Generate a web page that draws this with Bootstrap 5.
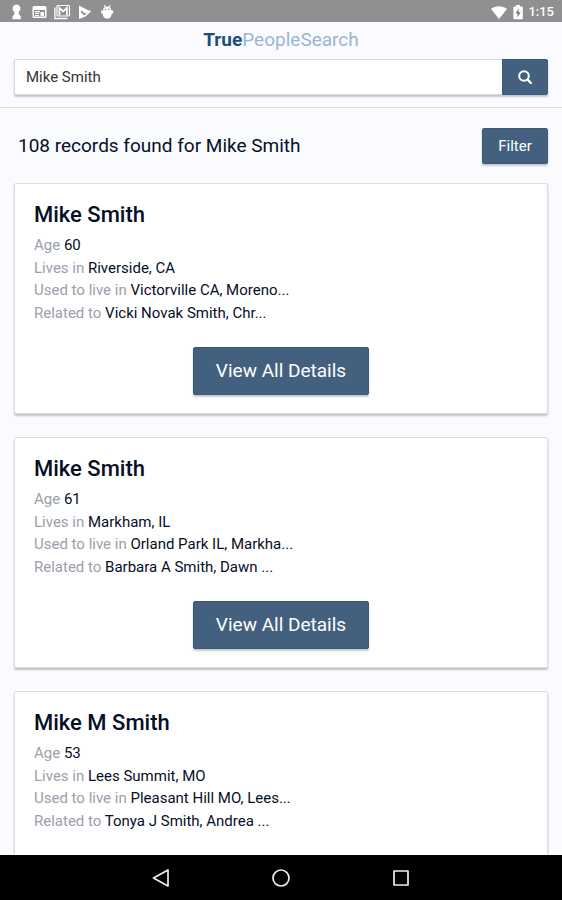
<!DOCTYPE html>
<html lang="en">
<head>
<meta charset="utf-8">
<meta name="viewport" content="width=device-width, initial-scale=1">
<title>TruePeopleSearch</title>
<link href="https://cdn.jsdelivr.net/npm/bootstrap@5.3.0/dist/css/bootstrap.min.css" rel="stylesheet">
<style>
body { font-family: Roboto, "Liberation Sans", sans-serif; background: #fafbff; color: #050f26; font-size: 15px; }
.status-bar { background: #909090; height: 22px; font-size: 13px; font-weight: 500; line-height: 22px; padding: 1px 8px 0; }
.status-icons { gap: 6px; }
.site-header { padding: 6px 14px 12px; border-bottom: 1px solid #dcdde0; }
.brand { font-size: 19px; line-height: 24px; color: #9ab5d1; margin-bottom: 7px; }
.brand:hover { color: #9ab5d1; }
.brand strong { color: #1d4f7b; font-weight: 700; }
.search-box { box-shadow: 0 2px 2px #c4c5c8; border-radius: 2px; }
.search-box .form-control { height: 36px; border: 1px solid #d6d7d9; border-radius: 2px; padding: 0 11px; font-size: 15px; color: #333; }
.btn-steel { --bs-btn-bg: #43617f; --bs-btn-color: #fff; --bs-btn-border-color: #3b5a79; --bs-btn-hover-bg: #385470; --bs-btn-hover-color: #fff; --bs-btn-border-radius: 2px; }
.search-btn { width: 46px; padding: 0 0 2px; }
.filter-btn { width: 66px; height: 36px; padding: 0; font-size: 15px; box-shadow: 0 2px 2px #c9cacd; }
.results { padding: 20px 14px 0; }
.results-head { margin-bottom: 19px; padding-left: 4px; }
.results-title { font-size: 19px; line-height: 24px; font-weight: 400; }
.result-card { border: 1px solid #dcdde0; border-radius: 2px; box-shadow: 0 2px 2px #c2c3c5; padding: 17px 19px 18px; margin-bottom: 23px; background: #fff; color: inherit; }
.person-name { font-size: 22px; line-height: 28px; font-weight: 500; margin-bottom: 5px; }
.fact-label { color: #9aa0ac; }
.details-btn { width: 176px; height: 48px; padding: 0; margin-top: 23px; font-size: 19px; line-height: 46px; box-shadow: 0 2px 2px #c9cacd; }
.system-nav { background: #000; height: 45px; gap: 96px; }
.system-nav button { width: 24px; height: 24px; }
</style>
<script src="https://cdn.jsdelivr.net/npm/bootstrap@5.3.0/dist/js/bootstrap.bundle.min.js"></script>
</head>
<body>
<div class="d-flex flex-column vh-100 overflow-hidden">
  <div class="status-bar d-flex justify-content-between align-items-center text-white flex-shrink-0">
    <div class="status-icons d-flex align-items-center">
      <svg width="17" height="16" viewBox="0 0 17 16" fill="#fff" aria-hidden="true"><path d="M8.500 .5a4 4 0 0 1 2.500 7.100L10.800 10l2 2.500v2.800H4.500v-2.800l2-2.500L6 7.600A4 4 0 0 1 8.500.5z"/></svg>
      <svg width="17" height="16" viewBox="0 0 17 16" aria-hidden="true"><path fill="#fff" fill-rule="evenodd" d="M3 2h11a1.500 1.500 0 0 1 1.500 1.500v9A1.500 1.500 0 0 1 14 14H3a1.500 1.500 0 0 1-1.500-1.500v-9A1.500 1.500 0 0 1 3 2zm0 4v6.500h11V6z"/><path fill="#fff" d="M4 7h5v1.200H4zm0 2h4v1.100H4zm0 2h4v1H4zM9.500 8H13v4H9.500z"/></svg>
      <svg width="17" height="16" viewBox="0 0 17 16" fill="none" stroke="#fff" aria-hidden="true"><path d="M.9 3.500v11h12.500" stroke-width="1.300"/><rect x="3" y="1.500" width="12.500" height="10.500" rx="1" stroke-width="1.200"/><path d="M5.500 11.500V4l3.700 3.300L12.900 4v7.500" stroke-width="1.700"/></svg>
      <svg width="17" height="16" viewBox="0 0 17 16" aria-hidden="true"><path fill="#fff" d="M2 1.500 14 7.800 7.500 9.200 4.500 6.500 3.500 8l3.700 3.500L12.700 6l1.300 1.800-6 5L2 15z"/></svg>
      <svg width="17" height="16" viewBox="0 0 17 16" aria-hidden="true"><path d="m4 1 1.600 2.500m4.800-2.500-1.600 2.500" stroke="#fff" stroke-width="1.100"/><path fill="#fff" d="M3 6.500C3.200 4 4.800 2.600 7.200 2.600S11.200 4 11.400 6.500h1.800v3h-1.500c0 3.200-1.700 5.200-4.500 5.200s-4.500-2-4.500-5.200H1.200v-3z"/><circle cx="5.400" cy="5.500" r=".8" fill="#909090"/><circle cx="9" cy="5.500" r=".8" fill="#909090"/></svg>
    </div>
    <div class="d-flex align-items-center">
      <svg class="me-1" width="18" height="16" viewBox="0 0 18 16" fill="#fff" aria-hidden="true"><path d="M1 5C5.500 1.200 12.500 1.200 17 5L9 15z"/></svg>
      <svg class="me-1" width="12" height="16" viewBox="0 0 12 16" aria-hidden="true"><path fill="#fff" d="M4 1h4v1.500h2c.5 0 .8.300.8.800v11.200c0 .5-.3.800-.8.800H2.200c-.5 0-.8-.3-.8-.8V3.300c0-.5.300-.8.800-.8H4z"/><path fill="#777" d="M7 4.300 3.500 9.500h2.200L5 13.500l3.700-5.300H6.500z"/></svg>
      <span>1:15</span>
    </div>
  </div>

  <header class="site-header flex-shrink-0">
    <a href="#" class="brand d-block text-center text-decoration-none"><strong>True</strong>PeopleSearch</a>
    <form class="search-box input-group" role="search">
      <input type="text" class="form-control" value="Mike Smith" aria-label="Name">
      <button type="button" class="btn btn-steel search-btn" aria-label="Search">
        <svg width="14" height="14" viewBox="0 0 14 14" fill="none" stroke="#fff" stroke-width="2" aria-hidden="true"><circle cx="6" cy="6" r="4.800"/><path d="m9.500 9.500 3.300 3.300" stroke-width="2.400" stroke-linecap="round"/></svg>
      </button>
    </form>
  </header>

  <main class="results flex-grow-1 overflow-hidden">
    <div class="results-head d-flex justify-content-between align-items-center">
      <h1 class="results-title mb-0">108 records found for Mike Smith</h1>
      <button type="button" class="btn btn-steel filter-btn">Filter</button>
    </div>

    <article class="card result-card">
      <h2 class="person-name">Mike Smith</h2>
      <div><span class="fact-label">Age</span> 60</div>
      <div><span class="fact-label">Lives in</span> Riverside, CA</div>
      <div><span class="fact-label">Used to live in</span> Victorville CA, Moreno...</div>
      <div><span class="fact-label">Related to</span> Vicki Novak Smith, Chr...</div>
      <a href="#" class="btn btn-steel details-btn align-self-center">View All Details</a>
    </article>

    <article class="card result-card">
      <h2 class="person-name">Mike Smith</h2>
      <div><span class="fact-label">Age</span> 61</div>
      <div><span class="fact-label">Lives in</span> Markham, IL</div>
      <div><span class="fact-label">Used to live in</span> Orland Park IL, Markha...</div>
      <div><span class="fact-label">Related to</span> Barbara A Smith, Dawn ...</div>
      <a href="#" class="btn btn-steel details-btn align-self-center">View All Details</a>
    </article>

    <article class="card result-card pb-5">
      <h2 class="person-name">Mike M Smith</h2>
      <div><span class="fact-label">Age</span> 53</div>
      <div><span class="fact-label">Lives in</span> Lees Summit, MO</div>
      <div><span class="fact-label">Used to live in</span> Pleasant Hill MO, Lees...</div>
      <div><span class="fact-label">Related to</span> Tonya J Smith, Andrea ...</div>
    </article>
  </main>

  <nav class="system-nav d-flex justify-content-center align-items-center flex-shrink-0" aria-label="System">
    <button type="button" class="btn p-0 border-0 d-flex" aria-label="Back"><svg width="24" height="24" viewBox="0 0 24 24" fill="none" stroke="#eee" stroke-width="1.700" stroke-linejoin="round"><path d="M19 4v16L4.500 12z"/></svg></button>
    <button type="button" class="btn p-0 border-0 d-flex" aria-label="Home"><svg width="24" height="24" viewBox="0 0 24 24" fill="none" stroke="#eee" stroke-width="1.700"><circle cx="12" cy="12" r="8"/></svg></button>
    <button type="button" class="btn p-0 border-0 d-flex" aria-label="Recent apps"><svg width="24" height="24" viewBox="0 0 24 24" fill="none" stroke="#eee" stroke-width="1.700" stroke-linejoin="round"><rect x="5" y="5" width="14" height="14"/></svg></button>
  </nav>
</div>
</body>
</html>
